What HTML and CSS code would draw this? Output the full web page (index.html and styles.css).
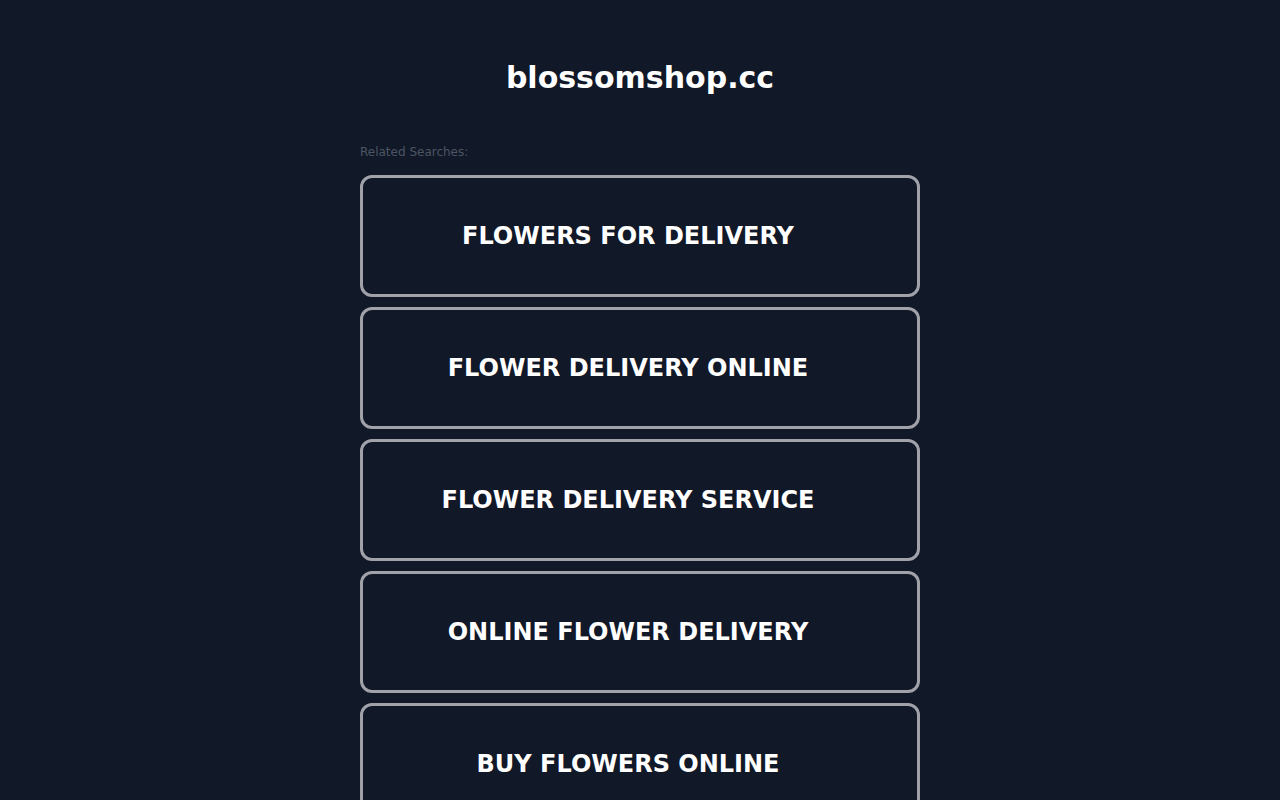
FILE: index.html
```html
<!DOCTYPE html>
<html lang="en">
<head>
    <meta charset="UTF-8">
    <meta name="viewport" content="width=device-width, initial-scale=1.0">
    <title>blossomshop.cc</title>
    <link rel="stylesheet" href="styles.css">
</head>
<body>
    <main class="page">
        <h1 class="domain">blossomshop.cc</h1>
        <p class="related-label">Related Searches:</p>
        <section class="search-list">
            <a class="search-item" href="#">FLOWERS FOR DELIVERY</a>
            <a class="search-item" href="#">FLOWER DELIVERY ONLINE</a>
            <a class="search-item" href="#">FLOWER DELIVERY SERVICE</a>
            <a class="search-item" href="#">ONLINE FLOWER DELIVERY</a>
            <a class="search-item" href="#">BUY FLOWERS ONLINE</a>
        </section>
    </main>
</body>
</html>
```

FILE: styles.css
```css
body {
    margin: 0;
    background-color: #111827;
    font-family: "DejaVu Sans", sans-serif;
    color: #fff;
}

.page {
    width: 560px;
    margin: 0 auto;
    padding-top: 58px;
}

.domain {
    margin: 0;
    text-align: center;
    font-size: 30px;
    font-weight: bold;
    line-height: 40px;
}

.related-label {
    margin: 46px 0 15px;
    font-size: 12px;
    line-height: 16px;
    color: #4b5563;
}

.search-list {
    display: flex;
    flex-direction: column;
    gap: 10px;
}

.search-item {
    display: flex;
    align-items: center;
    justify-content: center;
    height: 116px;
    padding-right: 24px;
    border: 3px solid #a1a1aa;
    border-radius: 12px;
    color: #fff;
    text-decoration: none;
    font-size: 24px;
    font-weight: bold;
}
```
